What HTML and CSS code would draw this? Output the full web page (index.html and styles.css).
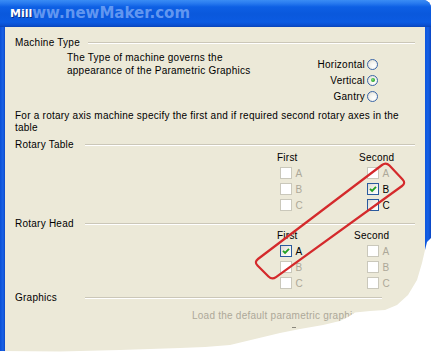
FILE: index.html
```html
<!DOCTYPE html>
<html>
<head>
<meta charset="utf-8">
<title>Mill</title>
<link rel="stylesheet" href="styles.css">
</head>
<body>
<div class="window">
  <div class="titlebar">
    <span class="title">Mill</span>
    <span class="watermark">ww.newMaker.com</span>
  </div>
  <div class="client">
    <div class="group-head"><span class="label">Machine Type</span><span class="groove"></span></div>
    <div class="machine">
      <p class="desc">The Type of machine governs the<br>appearance of the Parametric Graphics</p>
      <div class="radios">
        <div class="radio-row">Horizontal<span class="rb"></span></div>
        <div class="radio-row">Vertical<span class="rb on"></span></div>
        <div class="radio-row">Gantry<span class="rb"></span></div>
      </div>
    </div>
    <p class="note">For a rotary axis machine specify the first and if required second rotary axes in the<br>table</p>

    <div class="group-head gap-table"><span class="label">Rotary Table</span><span class="groove"></span></div>
    <div class="axes">
      <div class="col col-first">
        <div class="colhead">First</div>
        <div class="cb dis"><span class="box"></span>A</div>
        <div class="cb dis"><span class="box"></span>B</div>
        <div class="cb dis"><span class="box"></span>C</div>
      </div>
      <div class="col col-second">
        <div class="colhead">Second</div>
        <div class="cb dis"><span class="box"></span>A</div>
        <div class="cb"><span class="box"><svg viewBox="0 0 12 12" width="12" height="12"><path d="M3 5.8 L5.1 7.9 L9 3.9" fill="none" stroke="#21a121" stroke-width="1.9"/></svg></span>B</div>
        <div class="cb"><span class="box"></span>C</div>
      </div>
    </div>

    <div class="group-head gap-head"><span class="label">Rotary Head</span><span class="groove"></span></div>
    <div class="axes axes-head">
      <div class="col col-first">
        <div class="colhead">First</div>
        <div class="cb"><span class="box"><svg viewBox="0 0 12 12" width="12" height="12"><path d="M3 5.8 L5.1 7.9 L9 3.9" fill="none" stroke="#21a121" stroke-width="1.9"/></svg></span>A</div>
        <div class="cb dis"><span class="box"></span>B</div>
        <div class="cb dis"><span class="box"></span>C</div>
      </div>
      <div class="col col-second">
        <div class="colhead shift">Second</div>
        <div class="cb dis"><span class="box"></span>A</div>
        <div class="cb dis"><span class="box"></span>B</div>
        <div class="cb dis"><span class="box"></span>C</div>
      </div>
    </div>

    <div class="group-head short"><span class="label">Graphics</span><span class="groove"></span></div>
    <p class="load">Load the default parametric graphics</p>
    <div class="stub"></div>
  </div>

  <svg class="annotation" viewBox="0 0 431 353" width="431" height="353">
    <path d="M389.5,165.6 L402.6,179.4 Q406,183 402,186 L276,277.1 Q272,280 268.5,276.5 L257.5,265.5 Q254,262 258,259 L382,165 Q386,162 389.5,165.6 Z" fill="none" stroke="#d42a2c" stroke-width="2.2"/>
  </svg>
  <svg class="torn" viewBox="0 0 431 353" width="431" height="353">
    <path d="M0,351 L60,351.5 L120,350 L180,348 L205,347 L230,345 L255,339 L280,333 L300,329 L323,325 L340,321 L348,317 L355,312.5 L370,311 L385,310 L397,305 L408,295 L417,280 L422,263 L425,250 L427,242 L431,238 L431,353 L0,353 Z" fill="#ffffff"/>
  </svg>
</div>
</body>
</html>
```

FILE: styles.css
```css
* {
  box-sizing: border-box;
  margin: 0;
  padding: 0;
}

html, body {
  width: 431px;
  height: 353px;
  overflow: hidden;
  background: #ffffff;
}

body {
  font-family: "Liberation Sans", Arial, sans-serif;
  font-size: 10px;
  line-height: 13px;
  letter-spacing: 0.24px;
  color: #000000;
}

.window {
  position: relative;
  width: 431px;
  height: 353px;
  background: linear-gradient(90deg, #0a4fd6 0, #1a62e6 3px, #0a48c8 5px, #0b55de 425px, #1560e4 428px, #0a46c4 431px);
  border-top-right-radius: 8px;
  overflow: hidden;
}

.titlebar {
  display: flex;
  align-items: flex-start;
  height: 27px;
  padding: 7px 0 0 10px;
  background: linear-gradient(180deg, #3a8cf4 0, #2a7cf0 3px, #0d5fe4 7px, #0a58dc 14px, #0b5be2 22px, #0a50d2 25px, #0843b8 27px);
}

.title {
  font-family: "DejaVu Sans", sans-serif;
  font-weight: bold;
  font-size: 11px;
  line-height: 13px;
  letter-spacing: 0;
  color: #ffffff;
  text-shadow: 1px 1px 0 #0a2f8a;
}

.watermark {
  margin-top: -3px;
  margin-left: 0;
  font-family: "DejaVu Sans", sans-serif;
  font-weight: bold;
  font-size: 15px;
  line-height: 18px;
  letter-spacing: 0;
  color: rgba(165, 198, 255, 0.58);
  white-space: nowrap;
}

.client {
  margin: 0 6px 0 5px;
  height: 326px;
  background: #ece9d8;
  padding: 9px 10px 0 10px;
}

.group-head {
  display: flex;
  align-items: center;
  height: 13px;
}

.group-head .label {
  min-width: 70px;
  padding-right: 8px;
  white-space: nowrap;
}

.groove {
  flex: 1;
  height: 2px;
  border-top: 1px solid #cbc7b8;
  border-bottom: 1px solid #ffffff;
}

.group-head.short .groove {
  margin-right: 33px;
}

.machine {
  display: flex;
  justify-content: space-between;
  align-items: flex-start;
  margin-top: 2px;
  padding-left: 52px;
  padding-right: 37px;
}

.radios {
  margin-top: 5px;
  display: flex;
  flex-direction: column;
  align-items: flex-end;
}

.radio-row {
  display: flex;
  align-items: center;
  justify-content: flex-end;
  gap: 2px;
  height: 16px;
}

.rb {
  position: relative;
  width: 11px;
  height: 11px;
  border-radius: 50%;
  border: 1px solid #3b66a8;
  background: radial-gradient(circle at 65% 65%, #ffffff 0, #f4f3ee 45%, #d8d6cc 100%);
}

.rb.on::after {
  content: "";
  position: absolute;
  left: 2.5px;
  top: 2.5px;
  width: 4px;
  height: 4px;
  border-radius: 50%;
  background: radial-gradient(circle at 40% 40%, #7ee07e 0, #2fa82f 60%, #1d861d 100%);
}

.note {
  margin-top: 6px;
  line-height: 12px;
  white-space: nowrap;
}

.gap-table {
  margin-top: 4px;
}

.axes {
  display: flex;
  padding-left: 262px;
}

.axes-head {
  margin-top: -1px;
}

.col-first {
  width: 82px;
}

.colhead {
  height: 13px;
}

.colhead.shift {
  margin-left: -5px;
}

.col-first .cb {
  padding-left: 2.5px;
}

.col-second .cb {
  padding-left: 7.5px;
}

.axes .colhead + .cb {
  margin-top: 1px;
}

.cb {
  display: flex;
  align-items: center;
  gap: 4px;
  height: 16px;
}

.box {
  display: block;
  width: 12px;
  height: 12px;
  border: 1px solid #2a5a9e;
  background: linear-gradient(135deg, #dcdad2 0, #f2f1ec 50%, #ffffff 100%);
  position: relative;
}

.box svg {
  position: absolute;
  left: -1px;
  top: -1px;
}

.cb.dis {
  color: #aca899;
}

.cb.dis .box {
  border-color: #cac8bb;
  background: #ffffff;
}

.gap-head {
  margin-top: 4px;
}

.load {
  margin-top: 5px;
  margin-left: 177px;
  color: #aca899;
  white-space: nowrap;
}

.stub {
  width: 4px;
  height: 1px;
  margin-top: 5px;
  margin-left: 277px;
  background: #8a877c;
}

.annotation,
.torn {
  position: absolute;
  left: 0;
  top: 0;
  pointer-events: none;
}
```
